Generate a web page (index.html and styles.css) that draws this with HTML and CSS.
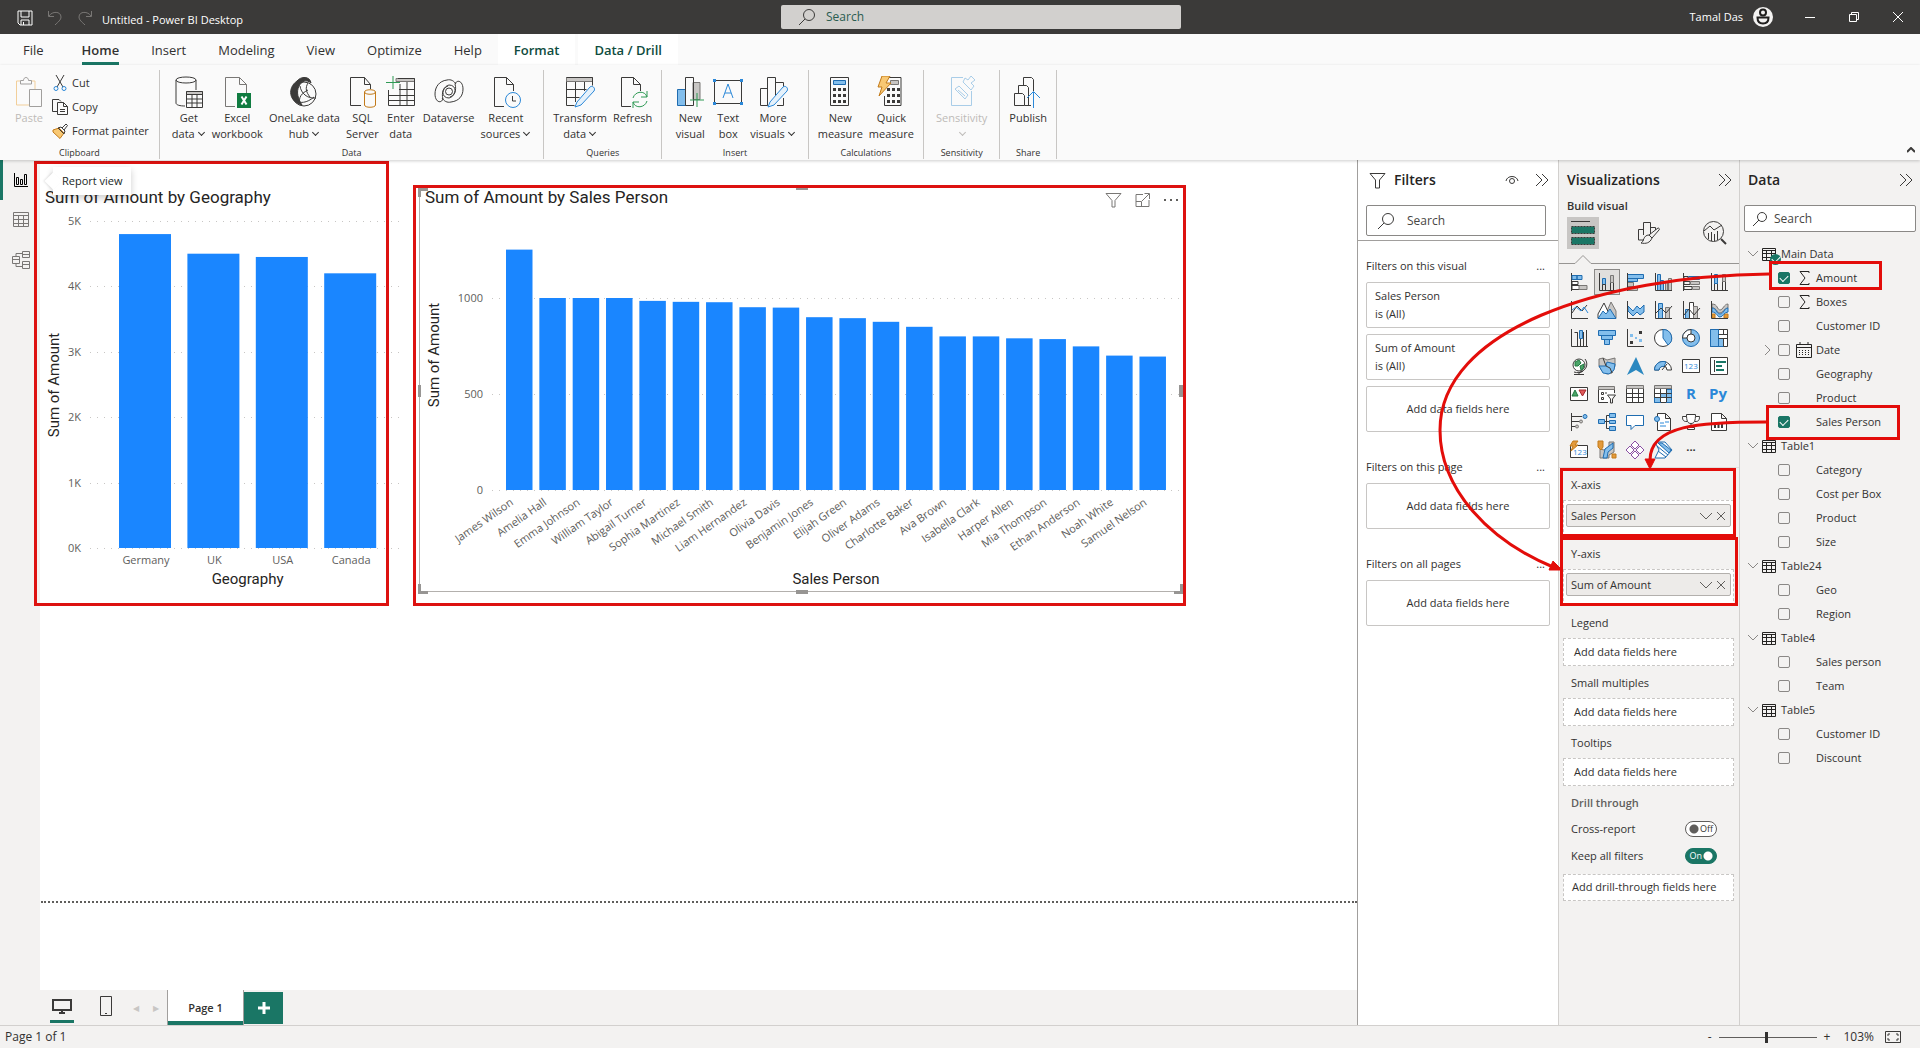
FILE: index.html
```html
<!DOCTYPE html>
<html lang="en">
  <head>
    <meta charset="UTF-8">
    <meta name="viewport" content="width=device-width, initial-scale=1.0">
    <title>Untitled - Power BI Desktop</title>
    <link rel="stylesheet" href="styles.css">
  </head>
  <body>
    <header class="titlebar">
      <div class="titlebar-left">
        <button class="plain" aria-label="Save"><svg width="16" height="16"><path d="M1 1h14v14H3l-2-2zM4 1v6h8V1M4 15v-5h8v5M6.5 12v3"/></svg></button>
        <button class="plain dim" aria-label="Undo"><svg width="16" height="16"><path d="M1.5 1v5.5H7M2 6C5 1 14 1 14 7c0 3-3 5-6 8"/></svg></button>
        <button class="plain dim" aria-label="Redo"><svg width="16" height="16"><path d="M14.5 1v5.5H9M14 6C11 1 2 1 2 7c0 3 3 5 6 8"/></svg></button>
        <span>Untitled - Power BI Desktop</span>
      </div>
      <label class="search title-search">
        <svg width="18" height="18"><circle cx="11" cy="7" r="5.5"/><path d="M7 11l-6 6"/></svg>
        <input type="text" placeholder="Search" aria-label="Search">
      </label>
      <div class="titlebar-right">
        <span>Tamal Das</span>
        <svg class="avatar" width="20" height="20"><circle class="face" cx="10" cy="10" r="10"/><circle cx="10" cy="5.5" r="3"/><path d="M4.5 10.5h11c0 4-2 6-5.5 6s-5.5-2-5.5-6z"/></svg>
        <button class="plain" aria-label="Minimize"><svg width="10" height="10"><path d="M0 5.5h10"/></svg></button>
        <button class="plain" aria-label="Restore"><svg width="10" height="10"><path d="M.5 2.5h7v7h-7zM2.5 2.5v-2h7v7h-2"/></svg></button>
        <button class="plain" aria-label="Close"><svg width="10" height="10"><path d="M0 0l10 10M10 0L0 10"/></svg></button>
      </div>
    </header>

    <nav class="tabs">
      <button>File</button>
      <button class="active">Home</button>
      <button>Insert</button>
      <button>Modeling</button>
      <button>View</button>
      <button>Optimize</button>
      <button>Help</button>
      <button class="context">Format</button>
      <button class="context">Data / Drill</button>
    </nav>

    <section class="ribbon">
      <div class="group clipboard">
        <div class="tools">
          <button class="tool disabled" disabled>
            <svg width="30" height="32"><path class="or" d="M6 5H2.5v24H15M17 5h4v8"/><path d="M6.5 8V4.5h3c0-4 5-4 5 0h3V8z"/><path d="M15.5 13.5h12v17h-12z"/></svg>
            <span>Paste</span>
          </button>
          <div class="small-tools">
            <button><svg width="16" height="16"><path d="M4 0l7 12M12 0L5 12"/><circle class="bl" cx="4" cy="13.5" r="2"/><circle class="bl" cx="12" cy="13.5" r="2"/></svg>Cut</button>
            <button><svg width="16" height="16"><path d="M5 12.5H.5v-12H7l2 2M5.5 3.5h6l4 4v8h-10zM11.5 3.5v4h4M8 10.5h5M8 12.5h5"/></svg>Copy</button>
            <button><svg width="16" height="16"><path class="of" d="M1 7l6-2 5 5-4 5.5L1 9z"/><path d="M6 5l6 6 1-3-4-4zM10 5l4-4 1.5 1.5L12 7"/></svg>Format painter</button>
          </div>
        </div>
        <h2>Clipboard</h2>
      </div>

      <div class="group wide">
        <div class="tools">
          <button class="tool">
            <svg width="30" height="32"><path d="M22 14V4c0-4-20-4-20 0v23c0 2 4 3 9 3M2 4c0 4 20 4 20 0"/><path class="gf" d="M12.5 15.5h16v3h-16z"/><path d="M12.5 15.5h16v16h-16zM12.5 18.5h16M12.5 23h16M12.5 27h16M18 18.5v13M23 18.5v13"/></svg>
            <span>Get<br>data<i class="chev"></i></span>
          </button>
          <button class="tool">
            <svg width="30" height="32"><path class="soft" d="M13 30.5H3.5v-29h14l7 7V17M17.5 1.5v7h7"/><path class="xl" d="M15 17h14v15H15z"/><path class="xx" d="M19.5 20.5l5 8M24.5 20.5l-5 8"/></svg>
            <span>Excel<br>workbook</span>
          </button>
          <button class="tool">
            <svg width="30" height="32"><circle cx="15" cy="18" r="12"/><path class="kf" d="M8 5c4-5 13-5 14 2-5-4-9-2-12 3-3 6-1 13 3 19C0 26-2 12 8 5z"/><path d="M11 10c1 7 7 13 16 12M19 7c-3 5-2 9 2 14M11 28c-2-7 2-11 8-14M5 24c6 4 13 3 20-3"/></svg>
            <span>OneLake data<br>hub<i class="chev"></i></span>
          </button>
          <button class="tool">
            <svg width="30" height="32"><path d="M14 29.5H3.5v-28h14l6 7V13M17.5 1.5v7h6"/><path class="brn" d="M17.5 16v13c0 3 11 3 11 0V16c0-3-11-3-11 0c0 3 11 3 11 0"/></svg>
            <span>SQL<br>Server</span>
          </button>
          <button class="tool">
            <svg width="30" height="32"><path class="gf" d="M10 2.5h18.5v3H10z"/><path d="M12 2.5h16.5v27h-26V14M2.5 19.5h26M2.5 24.5h26M13 13.5h15.5M14 8v21M21 6v23"/><path class="gr" d="M7 0v13M0 6.5h14"/></svg>
            <span>Enter<br>data</span>
          </button>
          <button class="tool">
            <svg width="30" height="32"><path d="M17 26c8-1 12-6 12-13 0-8-6-10-8-5 2 6-1 13-6 14-8 0-8-10-1-12M13 4C5 5 1 11 1 18c0 8 6 10 8 5-2-6 1-13 6-14 8 0 8 10 1 12"/><circle cx="15" cy="15.5" r="3.5"/><path d="M13 4c4-1 7 1 9 4M17 26c-4 1-7-1-9-4"/></svg>
            <span>Dataverse</span>
          </button>
          <button class="tool">
            <svg width="30" height="32"><path d="M13 30.5H3.5v-29h12l7 7V15M15.5 1.5v7h7"/><circle class="bl" cx="22" cy="24" r="7.5"/><path d="M21.5 20v5H25"/></svg>
            <span>Recent<br>sources<i class="chev"></i></span>
          </button>
        </div>
        <h2>Data</h2>
      </div>

      <div class="group">
        <div class="tools">
          <button class="tool">
            <svg width="30" height="32"><path class="gf" d="M1.5 1.5h26v4h-26z"/><path d="M1.5 5.5v24h8M1.5 1.5h26v8M1.5 13.5h20M1.5 21.5h13M10.5 6v20M19.5 6v9"/><path class="pen" d="M12 26L25 11c2-2 6 1 4 4L16 29l-6 2z"/></svg>
            <span>Transform<br>data<i class="chev"></i></span>
          </button>
          <button class="tool">
            <svg width="30" height="32"><path d="M13 30.5H3.5v-29h12l7 7V15M15.5 1.5v7h7"/><path class="gr" d="M15 22c2-7 12-8 14-1M29 15v6h-6M29 25c-2 7-12 8-14 1M15 32v-6h6"/></svg>
            <span>Refresh</span>
          </button>
        </div>
        <h2>Queries</h2>
      </div>

      <div class="group wide">
        <div class="tools">
          <button class="tool">
            <svg width="30" height="32"><path class="bf" d="M2.5 13.5h8v16h-8z"/><path class="gf" d="M18 6.5h7v17h-7z"/><path d="M10.5 1.5h8v28h-8z"/><path class="gr" d="M22 17v14M15 24h14"/></svg>
            <span>New<br>visual</span>
          </button>
          <button class="tool">
            <svg width="30" height="32"><path d="M1.5 4.5h27v23h-27z"/><path class="bk" d="M0 3h3v3H0zM27 3h3v3h-3zM0 26h3v3H0zM27 26h3v3h-3z"/><path class="bl" d="M10 22l5-14 5 14M12 17h6"/></svg>
            <span>Text<br>box</span>
          </button>
          <button class="tool">
            <svg width="30" height="32"><path d="M9.5 29.5h-7v-17h7zM9.5 12V1.5h8V20M17.5 6.5h8v5M9.5 29.5V12M25.5 22v7.5H19"/><path class="pen" d="M12 26L25 11c2-2 6 1 4 4L16 29l-6 2z"/></svg>
            <span>More<br>visuals<i class="chev"></i></span>
          </button>
        </div>
        <h2>Insert</h2>
      </div>

      <div class="group">
        <div class="tools">
          <button class="tool">
            <svg width="30" height="32"><path d="M5.5 1.5h18v28h-18z"/><path class="bf" d="M8.5 4.5h12v4h-12z"/><path class="dots" d="M8 13.5h13M8 19.5h13M8 25.5h13"/></svg>
            <span>New<br>measure</span>
          </button>
          <button class="tool">
            <svg width="30" height="32"><path d="M11 1.5h14v28H8.5V20"/><path class="gf" d="M14.5 4.5h8v4h-8z"/><path class="dots" d="M11 13.5h13M11 19.5h13M11 25.5h13"/><path class="of" d="M6 0h8l-4 7h5L3 20l3-9H2z"/></svg>
            <span>Quick<br>measure</span>
          </button>
        </div>
        <h2>Calculations</h2>
      </div>

      <div class="group wide">
        <div class="tools">
          <button class="tool disabled blue" disabled>
            <svg width="30" height="32"><path d="M16 1.5H4.5v28h20V15"/><path d="M8 13l4-3 9 9-3 4zM11 14l7 6M16 6l8 8 3-4-3-3 4-3-4-4-3 4-3-2z"/></svg>
            <span>Sensitivity<br><i class="chev"></i></span>
          </button>
        </div>
        <h2>Sensitivity</h2>
      </div>

      <div class="group">
        <div class="tools">
          <button class="tool">
            <svg width="30" height="32"><path d="M10.5 9V1.5h8l2 2V15M5.5 17V9.5h8l2 2V18M1.5 17.5h8l2 2v10h-10zM11.5 29.5H18M15.5 18v11"/><path class="bl" d="M20.5 32V16M14 22l6.5-6.5L27 22"/></svg>
            <span>Publish</span>
          </button>
        </div>
        <h2>Share</h2>
      </div>
      <button class="plain collapse" aria-label="Collapse ribbon"><svg width="8" height="6"><path d="M0 5l4-4 4 4"/></svg></button>
    </section>

    <main class="workspace">
      <aside class="rail">
        <button class="current" aria-label="Report view"><svg width="16" height="16"><path d="M1.5 1v13.5H15M3.5 5.5h2v7h-2zM7.5 7.5h2v5h-2zM11.5 2.5h2v10h-2z"/></svg></button>
        <button aria-label="Table view"><svg width="18" height="16"><path d="M1.5.5h15v14h-15zM1.5 3.5h15M1.5 7.5h15M1.5 11.5h15M6.5 3.5v11M11.5 3.5v11"/></svg></button>
        <button aria-label="Model view"><svg width="18" height="18"><path d="M10.5.5h7v6h-7zM10.5 3.5h7M10.5 10.5h7v7h-7zM10.5 13.5h7M.5 5.5h7v7h-7zM.5 8.5h7M4 5V2.5h6.5M4 12.5v3h6.5"/></svg></button>
      </aside>

      <section class="report">
        <div class="canvas">
          <div class="page-edge"></div>
          <figure class="visual geography">
            <figcaption>Sum of Amount by Geography</figcaption>
            <svg id="geographyChart" width="364" height="390"></svg>
          </figure>
          <figure class="visual sales">
            <figcaption>Sum of Amount by Sales Person</figcaption>
            <svg id="salesChart" width="764" height="380"></svg>
            <svg class="visual-tools" width="74" height="16">
              <path d="M1 1.5h15l-6 7V15H7V8.5z"/>
              <path d="M38 2.5h-7v12h13V8M31 9.5h5.5v5M37 9l7-7M39.5 1.5h5V7"/>
              <path class="more" d="M59 7h2v2h-2zM65 7h2v2h-2zM71 7h2v2h-2z"/>
            </svg>
            <svg class="handles" width="765" height="408"><path d="M0 2h10v3H3v6H0zM0 408v-10h3v7h7v3zM0 199h3v12H0zM378 2h12v2h-12zM378 404h12v4h-12zM765 408h-9v-3h6v-7h3zM761 199h4v12h-4z"/></svg>
          </figure>
          <div class="callout callout-geography"></div>
          <div class="callout callout-sales"></div>
          <div class="tip" role="tooltip">Report view</div>
        </div>

        <footer class="pages">
          <button class="device on" aria-label="Desktop layout"><svg width="20" height="16"><path d="M1 2h18v10H1zM10 12v3M7 15h6"/></svg></button>
          <button class="device phone" aria-label="Mobile layout"><svg width="14" height="21"><path d="M1.5.5h11v19h-11zM6 17.5h2"/></svg></button>
          <button class="step" aria-label="Previous page">◀</button>
          <button class="step" aria-label="Next page">▶</button>
          <button class="page-tab">Page 1</button>
          <button class="add-page" aria-label="New page"><svg width="12" height="12"><path d="M6 0v12M0 6h12"/></svg></button>
        </footer>
      </section>

      <aside class="pane filters">
        <div class="pane-head">
          <svg class="funnel" width="17" height="17"><path d="M1 1.5h15L10.5 8v8h-4V8z"/></svg>
          <h3>Filters</h3>
          <svg class="eye" width="14" height="10"><path d="M1 6c1-6 11-6 12 0"/><circle cx="7" cy="6" r="2.5"/></svg>
          <button class="plain fold" aria-label="Collapse"><svg width="14" height="14"><path d="M1 1l6 6-6 6M7 1l6 6-6 6"/></svg></button>
        </div>
        <div class="filter-search">
          <label class="search">
            <svg width="18" height="18"><circle cx="11" cy="7" r="5.5"/><path d="M7 11l-6 6"/></svg>
            <input type="text" placeholder="Search" aria-label="Search filters">
          </label>
        </div>
        <div class="filter-group">
          <h4>Filters on this visual <span>...</span></h4>
          <div class="card">Sales Person<br>is (All)</div>
          <div class="card">Sum of Amount<br>is (All)</div>
          <div class="card empty">Add data fields here</div>
        </div>
        <div class="filter-group">
          <h4>Filters on this page <span>...</span></h4>
          <div class="card empty">Add data fields here</div>
        </div>
        <div class="filter-group">
          <h4>Filters on all pages <span>...</span></h4>
          <div class="card empty">Add data fields here</div>
        </div>
      </aside>

      <aside class="pane build">
        <div class="pane-head">
          <h3>Visualizations</h3>
          <button class="plain fold" aria-label="Collapse"><svg width="14" height="14"><path d="M1 1l6 6-6 6M7 1l6 6-6 6"/></svg></button>
        </div>
        <h4>Build visual</h4>
        <div class="modes">
          <button class="on" aria-label="Build visual"><svg width="26" height="26"><path d="M1 1.5h19"/><path class="stitch" d="M1.5 6.5h23v7h-23zM1.5 17.5h23v7h-23z"/></svg></button>
          <button aria-label="Format visual"><svg width="26" height="26"><path d="M8 20H2.5V9.5H7M7.5 15V2.5h7V14M14.5 7.5h5V10"/><path d="M13 15l9-7c1 0 2 1 1 2l-7 8zM13 15l3 3c-2 5-6 6-11 5 3-1 2-8 8-8z"/></svg></button>
          <button aria-label="Analytics"><svg width="26" height="26"><circle cx="11.5" cy="11.5" r="10"/><path d="M2 11l6-5 4 4 8-5M6.5 13v6M9.5 12v9M12.5 14v7M15.5 11v9"/><path class="thick" d="M19 19l5 5"/></svg></button>
        </div>
        <svg class="notch" width="180" height="10"><path d="M0 9.5h16l8-8 8 8h148"/></svg>
        <div class="gallery">
          <svg><path d="M1.5 0v18"/><path class="b" d="M2 2.5h5v4H2zM7 2.5h5v4H7z"/><path class="w" d="M2 8.5h6v3H2zM2 12.5h9v4H2z"/><path class="g" d="M9 12.5h8v4H9z"/></svg>
          <svg class="picked"><path d="M1.5 0v17.5H18"/><path class="b" d="M4.5 5.5h3v6h-3z"/><path d="M4.5 11.5h3v6h-3zM12.5 9.5h3v8h-3z"/><path class="g" d="M12.5 2.5h3v7h-3z"/></svg>
          <svg><path class="b" d="M1.5 1.5h16v4h-16zM1.5 5.5h10v3h-10z"/><path class="g" d="M1.5 9.5h6v4h-6zM1.5 14.5h10v3h-10z"/><path d="M1.5 0v18"/></svg>
          <svg><path class="b" d="M3.5 1.5h3v16h-3zM6.5 7.5h3v10h-3z"/><path class="g" d="M11.5 9.5h2v8h-2zM14.5 5.5h3v12h-3z"/><path d="M1.5 0v17.5H18"/></svg>
          <svg><path d="M1.5 0v18M2 3.5h4v3H2zM2 8.5h6v3H2zM2 13.5h8v3H2z"/><path class="b" d="M6.5 3.5h11v3h-11z"/><path class="g" d="M8.5 8.5h9v3h-9zM10.5 13.5h7v3h-7z"/></svg>
          <svg><path d="M1.5 0v17.5H18M4.5 10.5h3v7h-3zM12.5 8.5h3v9h-3z"/><path class="b" d="M4.5 1.5h3v9h-3z"/><path class="g" d="M12.5 1.5h3v7h-3z"/></svg>

          <svg><path d="M1.5 0v17.5H18M2 12l5-7 5 5 5-6"/><path class="bs" d="M2 9l4-3 5 4 3-4 4 6"/></svg>
          <svg><path class="g" d="M6 17L13 1l5 9v7z"/><path class="w" d="M0 13L6 2l7 15H0z"/><path class="b" d="M0 17.5L5 10l3 3 4-5 6 9.5z"/></svg>
          <svg><path class="b" d="M2 5l5 5 4-5 3 3 4-4v7l-4 3-3-3-4 4-5-5z"/><path d="M1.5 0v17.5H18"/></svg>
          <svg><path class="b" d="M4.5 2.5h4v15h-4z"/><path class="g" d="M11.5 6.5h4v11h-4z"/><path d="M1.5 0v17.5H18M2 12l5-5 5 5 6-7"/></svg>
          <svg><path class="b" d="M3.5 8.5h4v9h-4z"/><path class="w" d="M7.5 1.5h4v16h-4z"/><path class="g" d="M11.5 5.5h4v12h-4z"/><path d="M1.5 0v17.5H18M2 14l5-6 5 6 6-7"/></svg>
          <svg><path class="g" d="M2 3c6 0 5 6 8 6s4-6 8-6v4c-4 0-5 5-8 5s-3-5-8-5z"/><path class="o" d="M2 13h3v4H2zM14 13h4v4h-4z"/><path class="b" d="M2 7c5 0 4 6 8 6s4-6 8-6v4c-4 0-5 5-8 5s-3-5-8-5z"/><path d="M1.5 0v17.5H18"/></svg>

          <svg><path d="M1.5 0v17.5H18M4.5 3.5h3v14M7.5 3.5v14M10.5 10v7M13.5 3v14.5M16.5 1v16.5"/><path class="b" d="M9.5 1.5h3v8h-3z"/></svg>
          <svg><path class="b" d="M.5 1.5h17v5H.5zM3.5 6.5h11v4h-11zM6.5 10.5h5v5h-5z"/></svg>
          <svg><path d="M1.5 0v17.5H18"/><path class="kf" d="M13 2h3v3h-3zM4 12h3v3H4z"/><path class="bk" d="M4 5h3v3H4zM9 8h2v2H9zM13 10h3v3h-3z"/></svg>
          <svg><circle class="w" cx="9" cy="9" r="8.5"/><path class="b" d="M9 .5a8.5 8.5 0 0 1 5 15.5L9 9z"/></svg>
          <svg><circle class="b" cx="9" cy="9" r="8.5"/><path class="w" d="M.5 9A8.5 8.5 0 0 1 9 .5V5a4 4 0 0 0-4 4z"/><circle class="w" cx="9" cy="9" r="4"/></svg>
          <svg><path class="w" d="M.5.5h17v17H.5z"/><path class="b" d="M.5.5h8v17h-8zM8.5 9.5h5v8h-5z"/><path d="M8.5 5.5h9M8.5 9.5h9M13.5.5v5M13.5 9.5v8"/></svg>

          <svg><circle class="w" cx="9" cy="8" r="6"/><path class="grn" d="M5 5l4-2 2 3-3 3-3 0zM10 9l4-2-1 5-2 1z"/><path d="M15 2c4 5 1 12-5 13M4 15c3 1 7 1 9-1M9 15v2M4 17.5h10"/></svg>
          <svg><path class="g" d="M1 2l4-1 4 2 8-2v8l-3 7-5 1-5-3-3-5z"/><path class="b" d="M1 9l7 0 1-4 8 2-1 6-5 4-6-1z"/><path d="M5 1l3 8 4 2 2 5"/></svg>
          <svg><path class="nav" d="M10 0L1 18l9-5 8 5z"/></svg>
          <svg><path class="w" d="M.5 13a8.5 8.5 0 0 1 17 0H13a4 4 0 0 0-8 0z"/><path class="b" d="M.5 13A8.5 8.5 0 0 1 12 5l-2 4.5A4 4 0 0 0 5 13z"/><path d="M8 13l5-6"/></svg>
          <svg><path class="w" d="M.5 2.5h17v13H.5z"/><text x="2" y="12">123</text></svg>
          <svg><path class="w" d="M.5.5h17v17H.5z"/><path d="M4.5 3v12"/><path class="teal" d="M6 5h10M6 9h6M6 13h8"/></svg>

          <svg><path class="w" d="M.5 2.5h17v13H.5z"/><path class="grn" d="M2 11l3-6 3 6z"/><path class="red" d="M9 5h7l-3.5 6z"/></svg>
          <svg><path class="w" d="M10 17.5H.5V2.5h16V8"/><path class="g" d="M.5 1.5h16v3H.5z"/><path d="M3.5 7.5h2v2h-2zM3.5 12.5h2v2h-2zM7 8h2M9.5 10h8l-3 4v4h-2v-4z"/></svg>
          <svg><path class="w" d="M.5 1.5h17v16H.5z"/><path class="g" d="M.5.5h17v3H.5z"/><path d="M.5 8.5h17M.5 12.5h17M6.5 4v13M12.5 4v13"/></svg>
          <svg><path class="w" d="M.5 1.5h17v16H.5z"/><path class="b" d="M6.5 8.5h6v4h-6zM12.5 4.5h5v13h-5zM.5 12.5h6v5h-6z"/><path class="g" d="M.5.5h17v3H.5z"/><path d="M.5 8.5h17M.5 12.5h17M6.5 4v13M12.5 4v13"/></svg>
          <svg><text class="big" x="4" y="14">R</text></svg>
          <svg><text class="big" x="-1" y="14">Py</text></svg>

          <svg><path d="M1.5 0v18M2 3.5h10M2 8.5h8M2 13.5h4"/><circle class="b" cx="15" cy="3.5" r="2"/><circle class="g" cx="11" cy="8.5" r="1.5"/><circle class="g" cx="7" cy="13.5" r="1.5"/></svg>
          <svg><path d="M6 8.5h5M8.5 2.5v13M8.5 2.5H11M8.5 15.5H11"/><path class="b" d="M.5 6.5h6v4h-6zM11.5.5h6v4h-6zM11.5 7.5h6v3h-6zM11.5 13.5h6v4h-6z"/></svg>
          <svg><path class="wb" d="M.5 2.5h17v10H9l-4 4v-4H.5z"/></svg>
          <svg><path class="w" d="M3.5.5h8l5 5v12h-13zM11.5.5v5h5"/><circle class="b" cx="3" cy="6" r="2.5"/><path class="bs" d="M6 10h4M11 9h4M6 13h6"/></svg>
          <svg><path class="w" d="M4.5 1.5h9c0 6-1 9-4.5 9s-4.5-3-4.5-9zM4.5 3.5h-4c0 4 1 5 4.5 5M13.5 3.5h4c0 4-1 5-4.5 5M9 11v3M5.5 16.5h7v-2h-7z"/></svg>
          <svg><path class="w" d="M1.5.5h10l5 5v12h-15zM11.5.5v5h5"/><path class="thick" d="M5 15v-3M8.5 15V9M12 15v-5"/></svg>

          <svg><path class="w" d="M.5 4.5h17v12H.5z"/><text x="3" y="14">123</text><path class="o" d="M3 0h5L5 4h3L1 10l2-5H0z"/></svg>
          <svg><path class="g" d="M2 8v9h9v-3l5-3V1h-5v5l-5 3z"/><path class="b" d="M7 8l8-6v5l-5 4-1 6H5z"/><path class="o" d="M0 0h5v6l-2 3-3-3zM14 13h4v4h-4z"/></svg>
          <svg class="violet"><path d="M9 0l4 4-4 4-4-4zM4 5l4 4-4 4-4-4zM14 5l4 4-4 4-4-4zM9 10l4 4-4 4-4-4z"/></svg>
          <svg><path class="wb" d="M1 1h10l7 8-7 8H1l4-8z"/><path class="wb" d="M5 3l11 8M3 5l11 9M4 10l8 6"/><path class="b" d="M4 2h4l9 7-2 3z"/></svg>
          <span class="more">···</span>
        </div>

        <div class="wells">
          <h5>X-axis</h5>
          <div class="well"><div class="pill">Sales Person<svg width="28" height="10"><path d="M1 2l6 6 6-6M18 1l8 8M26 1l-8 8"/></svg></div></div>
          <h5>Y-axis</h5>
          <div class="well"><div class="pill">Sum of Amount<svg width="28" height="10"><path d="M1 2l6 6 6-6M18 1l8 8M26 1l-8 8"/></svg></div></div>
          <h5>Legend</h5>
          <div class="well blank">Add data fields here</div>
          <h5>Small multiples</h5>
          <div class="well blank">Add data fields here</div>
          <h5>Tooltips</h5>
          <div class="well blank">Add data fields here</div>
          <h5 class="strong">Drill through</h5>
          <label class="switch">Cross-report <input type="checkbox" role="switch"><span>Off</span></label>
          <label class="switch">Keep all filters <input type="checkbox" role="switch" checked><span>On</span></label>
          <div class="well blank drill">Add drill-through fields here</div>
        </div>
      </aside>

      <aside class="pane data">
        <div class="pane-head">
          <h3>Data</h3>
          <button class="plain fold" aria-label="Collapse"><svg width="14" height="14"><path d="M1 1l6 6-6 6M7 1l6 6-6 6"/></svg></button>
        </div>
        <label class="search">
          <svg width="16" height="16"><circle cx="10" cy="6" r="4.5"/><path d="M7 9l-6 6"/></svg>
          <input type="text" placeholder="Search" aria-label="Search fields">
        </label>
        <ul class="fields" id="fields"></ul>
      </aside>

      <!-- red markup linking the ticked fields to the axis wells -->
      <svg class="markup" width="500" height="480">
        <rect x="350.5" y="102.5" width="110" height="26"/>
        <rect x="347.5" y="246.5" width="131" height="32"/>
        <rect x="141.5" y="309.5" width="173" height="66"/>
        <rect x="141.5" y="378.5" width="175" height="66"/>
        <path d="M349 114C180 116 20 170 20 270c0 60 50 111 113 137"/>
        <path d="M346 262c-66 0-116 3-116 38"/>
        <path class="tipfill" d="M142 410l-13 0 4-9zM230 309l-5-10h10z"/>
      </svg>
    </main>

    <footer class="status">
      <span>Page 1 of 1</span>
      <div class="zoom">
        <button class="plain" aria-label="Zoom out">-</button>
        <input type="range" min="0" max="100" value="49" aria-label="Zoom">
        <button class="plain" aria-label="Zoom in">+</button>
        <span>103%</span>
        <svg width="16" height="12"><path d="M.5.5h15v11H.5zM3 5V3h2M11 3h2v2M13 7v2h-2M5 9H3V7"/></svg>
      </div>
    </footer>

    <script>
      const NS = 'http://www.w3.org/2000/svg';

      function add(parent, tag, attrs, text) {
        const el = document.createElementNS(NS, tag);
        for (const key in attrs) el.setAttribute(key, attrs[key]);
        if (text) el.textContent = text;
        parent.appendChild(el);
      }

      function drawColumns(id, c) {
        const svg = document.getElementById(id);
        c.ticks.forEach(([value, label]) => {
          const y = Math.round(c.base - value * c.scale);
          add(svg, 'line', { class: 'grid', x1: c.left, x2: c.right, y1: y + 0.5, y2: y + 0.5 });
          add(svg, 'text', { class: 'tick', x: c.left - 9, y: y + 4, 'text-anchor': 'end' }, label);
        });
        c.rows.forEach(([name, value], i) => {
          const x = c.first + i * c.pitch;
          const h = value * c.scale;
          add(svg, 'rect', { class: 'bar', x: x, y: c.base - h, width: c.width, height: h });
          if (c.slant) {
            const tx = x + 8, ty = c.base + 14;
            add(svg, 'text', { class: 'tick', x: tx, y: ty, 'text-anchor': 'end', transform: `rotate(-35 ${tx} ${ty})` }, name);
          } else {
            add(svg, 'text', { class: 'tick', x: x + c.width / 2 + 1, y: c.base + 16, 'text-anchor': 'middle' }, name);
          }
        });
        const mid = c.first + ((c.rows.length - 1) * c.pitch + c.width) / 2;
        add(svg, 'text', { class: 'axis', x: mid, y: 375, 'text-anchor': 'middle' }, c.xTitle);
        add(svg, 'text', { class: 'axis', x: c.titleX, y: c.titleY, 'text-anchor': 'middle', transform: `rotate(-90 ${c.titleX} ${c.titleY})` }, 'Sum of Amount');
      }

      drawColumns('geographyChart', {
        left: 50, right: 362, base: 339, scale: 0.0654, first: 79, pitch: 68.4, width: 52,
        titleX: 19, titleY: 176, xTitle: 'Geography',
        ticks: [[5000, '5K'], [4000, '4K'], [3000, '3K'], [2000, '2K'], [1000, '1K'], [0, '0K']],
        rows: [['Germany', 4800], ['UK', 4500], ['USA', 4450], ['Canada', 4200]]
      });

      drawColumns('salesChart', {
        left: 72, right: 762, base: 281, scale: 0.192, first: 86, pitch: 33.34, width: 26.5, slant: true,
        titleX: 19, titleY: 146, xTitle: 'Sales Person',
        ticks: [[1000, '1000'], [500, '500'], [0, '0']],
        rows: [
          ['James Wilson', 1252], ['Amelia Hall', 1000], ['Emma Johnson', 1000], ['William Taylor', 1000],
          ['Abigail Turner', 985], ['Sophia Martinez', 980], ['Michael Smith', 978], ['Liam Hernandez', 952],
          ['Olivia Davis', 950], ['Benjamin Jones', 900], ['Elijah Green', 895], ['Oliver Adams', 876],
          ['Charlotte Baker', 850], ['Ava Brown', 800], ['Isabella Clark', 800], ['Harper Allen', 790],
          ['Mia Thompson', 786], ['Ethan Anderson', 748], ['Noah White', 700], ['Samuel Nelson', 695]
        ]
      });

      // * ticked, + numeric, @ date
      const tables = {
        'Main Data': ['*+Amount', '+Boxes', 'Customer ID', '@Date', 'Geography', 'Product', '*Sales Person'],
        'Table1': ['Category', 'Cost per Box', 'Product', 'Size'],
        'Table24': ['Geo', 'Region'],
        'Table4': ['Sales person', 'Team'],
        'Table5': ['Customer ID', 'Discount']
      };
      const down = '<svg width="12" height="8"><path d="M1 1l5 5 5-5"/></svg>';
      const grid = '<svg class="dark" width="14" height="13"><path d="M.5.5h13v12H.5zM.5 2.5h13M.5 5.5h13M.5 9.5h13M4.5 2v10M9.5 2v10"/></svg>';
      const sigma = '<svg class="dark" width="16" height="16"><path d="M13 3V1.5H4l5 6.5-5 6.5h9V13"/></svg>';
      const calendar = '<svg class="dark" width="16" height="16"><path d="M.5 2.5h15v13H.5zM.5 5.5h15M4 0v3M12 0v3"/><path stroke-dasharray="1 2" d="M3 8.5h11M3 10.5h11M3 12.5h11"/></svg>';
      const right = '<svg width="8" height="12"><path d="M1 1l5 5-5 5"/></svg>';

      let html = '';
      for (const name in tables) {
        const badge = name === 'Main Data' ? '<span class="badge"></span>' : '';
        html += `<li class="table-row">${down}<span class="table-icon">${grid}${badge}</span>${name}</li>`;
        tables[name].forEach(field => {
          const label = field.replace(/[*+@]/g, '');
          const icon = field.includes('+') ? sigma : field.includes('@') ? calendar : '';
          html += `<li><label><span class="expand">${field.includes('@') ? right : ''}</span>` +
            `<input type="checkbox"${field.includes('*') ? ' checked' : ''}>` +
            `<span class="type">${icon}</span>${label}</label></li>`;
        });
      }
      document.getElementById('fields').innerHTML = html;
    </script>
  </body>
</html>
```

FILE: styles.css
```css
* {
    box-sizing: border-box;
}

body {
    margin: 0;
    min-height: 100vh;
    display: flex;
    flex-direction: column;
    font-family: "Open Sans", "Noto Sans", sans-serif;
    font-size: 11px;
    line-height: 16px;
    color: #323130;
    background: #f3f2f1;
}

h2, h3, h4, h5, ul, figure {
    margin: 0;
    padding: 0;
    font-weight: 400;
}

button, input {
    font: inherit;
    color: inherit;
}

button {
    border: 0;
    padding: 0;
    background: none;
}

svg {
    display: block;
    flex: none;
    fill: none;
    stroke: #3b3a39;
}

.plain {
    display: flex;
    align-items: center;
}

/* Title bar */
.titlebar {
    display: grid;
    grid-template-columns: 1fr 400px 739px;
    align-items: center;
    height: 34px;
    background: #3b3a39;
    color: #fff;
}

.titlebar svg {
    stroke: #fff;
}

.titlebar .dim svg {
    stroke: #797775;
}

.titlebar-left {
    display: flex;
    align-items: center;
    gap: 14px;
    padding: 2px 0 0 17px;
}

.titlebar-left span {
    padding-top: 4px;
    margin-left: -5px;
}

.titlebar-right {
    display: flex;
    align-items: center;
    justify-content: flex-end;
    gap: 34px;
    padding-right: 17px;
}

.titlebar-right span {
    margin-right: -24px;
}

.titlebar .avatar {
    margin-right: -2px;
    stroke: #201f1e;
    stroke-width: 2;
}

.avatar .face {
    fill: #f3f2f1;
    stroke: none;
}

.search {
    display: flex;
    align-items: center;
    border: 1px solid #8a8886;
    border-radius: 2px;
    background: #fff;
}

.search input {
    width: 100%;
    min-width: 0;
    border: 0;
    padding: 0;
    outline: none;
    background: none;
    font-size: 12px;
}

.search input::placeholder {
    color: #484644;
    opacity: 1;
}

.title-search {
    height: 24px;
    gap: 10px;
    padding-left: 17px;
    border: 0;
    background: #d2d0ce;
}

.titlebar .title-search svg {
    stroke: #3b3a39;
}

.title-search input::placeholder {
    color: #2b5c50;
}

/* Ribbon */
.tabs {
    display: flex;
    height: 31px;
    padding-left: 7px;
    background: #fafafa;
    font-size: 13px;
}

.tabs button {
    padding: 0 16px;
}

.tabs button:first-child {
    margin-right: 6px;
}

.tabs .active {
    font-weight: 600;
    background: linear-gradient(#1a7665, #1a7665) center bottom / calc(100% - 32px) 3px no-repeat;
}

.tabs .context {
    margin-right: 3px;
    color: #0f4c40;
    font-weight: 600;
    background: #fff;
}

.ribbon {
    display: flex;
    height: 95px;
    padding-top: 5px;
    background: #fafafa;
    box-shadow: 0 1px 3px rgba(0, 0, 0, 0.2);
    z-index: 1;
}

.group {
    display: flex;
    flex-direction: column;
    justify-content: space-between;
    height: 89px;
    padding: 6px 6px 0;
    border-right: 1px solid #c8c6c4;
}

.group.clipboard {
    padding: 6px 10px 0 10px;
}

.group.wide {
    padding: 6px 9px 0;
}

.group h2 {
    font-size: 9px;
    line-height: 12px;
    text-align: center;
}

.tools {
    display: flex;
    justify-content: center;
}

.tool {
    display: flex;
    flex-direction: column;
    align-items: center;
    gap: 2px;
    min-width: 38px;
    padding: 0 3px;
    white-space: nowrap;
}

.disabled {
    color: #bebbb8;
}

.disabled svg {
    stroke: #a19f9d;
}

.disabled.blue svg {
    stroke: #a9cde8;
}

.chev {
    display: inline-block;
    width: 5px;
    height: 5px;
    margin: 0 2px 3px 4px;
    border: solid currentColor;
    border-width: 0 1px 1px 0;
    transform: rotate(45deg);
}

.small-tools {
    display: flex;
    flex-direction: column;
    margin: -5px 0 0 4px;
}

.small-tools button {
    display: flex;
    align-items: center;
    gap: 4px;
    height: 24px;
}

.ribbon svg .or { stroke: #f2cf9a; }
.ribbon svg .bl { stroke: #2b88d8; }
.ribbon svg .brn { stroke: #c27a1a; }
.ribbon svg .gr { stroke: #2f9a55; }
.ribbon svg .bf { fill: #83beec; stroke: #1f6cb0; }
.ribbon svg .gf { fill: #c8c6c4; stroke: #797775; }
.ribbon svg .of { fill: #f8c873; stroke: #c27a1a; }
.ribbon svg .kf { fill: #3b3a39; }
.ribbon svg .bk { fill: #2b88d8; stroke: none; }
.ribbon svg .soft { stroke: #797775; }
.ribbon svg .xl { fill: #107c41; stroke: none; }
.ribbon svg .xx { stroke: #fff; stroke-width: 2; }
.ribbon svg .pen { fill: #e5f1fb; stroke: #2b88d8; }
.ribbon svg .dots { stroke-width: 3; stroke-dasharray: 3 2; }

.collapse {
    margin: auto 5px 7px auto;
}

.collapse svg {
    stroke-width: 2;
}

/* Workspace */
.workspace {
    position: relative;
    flex: 1;
    display: flex;
}

.rail {
    width: 40px;
    background: #f3f2f1;
}

.rail button {
    display: flex;
    align-items: center;
    justify-content: center;
    width: 39px;
    height: 40px;
    border-left: 3px solid transparent;
}

.rail .current {
    border-color: #1a7665;
}

.rail svg {
    stroke: #797775;
}

.rail .current svg {
    stroke: #000;
}

.report {
    flex: 1;
    display: flex;
    flex-direction: column;
}

.canvas {
    position: relative;
    flex: 1;
    min-height: 600px;
    background: #fff;
}

.page-edge {
    position: absolute;
    top: 741px;
    left: 1px;
    right: 0;
    border-top: 2px dotted #605e5c;
}

.visual {
    position: absolute;
    top: 25px;
}

.visual figcaption {
    padding-left: 5px;
    font: 17px/24px Roboto, sans-serif;
    color: #252423;
}

.geography {
    left: 0;
}

.sales {
    left: 379px;
    width: 765px;
    height: 407px;
    border: solid #b3b0ad;
    border-width: 0 0 1px 1px;
}

.visual-tools {
    position: absolute;
    top: 7px;
    right: 5px;
    stroke: #797775;
}

.visual-tools .more {
    fill: #605e5c;
    stroke: none;
}

.handles {
    position: absolute;
    top: 1px;
    left: -2px;
}

.handles path {
    fill: #979593;
    stroke: none;
}

.grid {
    stroke: #c8c6c4;
    stroke-dasharray: 1 6;
}

.bar {
    fill: #1a86ff;
    stroke: none;
}

.tick {
    fill: #605e5c;
    stroke: none;
    font-size: 11px;
}

.axis {
    fill: #252423;
    stroke: none;
    font: 15px Roboto, sans-serif;
}

.callout {
    position: absolute;
    border: 3px solid #dd1210;
}

.callout-geography {
    top: 1px;
    left: -6px;
    width: 355px;
    height: 445px;
}

.callout-sales {
    top: 25px;
    left: 373px;
    width: 773px;
    height: 421px;
}

.tip {
    position: absolute;
    top: 7px;
    left: 13px;
    padding: 6px 8px 6px 9px;
    background: #fff;
    color: #201f1e;
    box-shadow: 0 3px 7px rgba(0, 0, 0, 0.2);
}

.tip::before {
    content: "";
    position: absolute;
    top: 8px;
    left: -6px;
    width: 12px;
    height: 12px;
    background: #fff;
    box-shadow: -1px 1px 2px rgba(0, 0, 0, 0.1);
    transform: rotate(45deg);
}

.pages {
    display: flex;
    align-items: center;
    height: 35px;
    padding-left: 10px;
}

.device {
    display: flex;
    align-items: center;
    justify-content: center;
    width: 24px;
    height: 31px;
    margin-right: 20px;
    border-bottom: 3px solid transparent;
}

.device svg {
    stroke-width: 2;
}

.device.phone {
    margin-right: 8px;
}

.phone svg {
    stroke-width: 1;
}

.device.on {
    border-color: #1a7665;
}

.step {
    width: 20px;
    color: #c8c6c4;
    font-size: 8px;
}

.page-tab {
    align-self: stretch;
    width: 77px;
    margin-left: 1px;
    border: solid #a19f9d;
    border-width: 0 1px;
    background: linear-gradient(#1a7665, #1a7665) bottom / 100% 4px no-repeat #fff;
    font-weight: 600;
}

.add-page {
    display: flex;
    align-items: center;
    justify-content: center;
    width: 39px;
    height: 32px;
    background: #1a7665;
}

.add-page svg {
    stroke: #fff;
    stroke-width: 3;
}

/* Side panes */
.pane {
    border-left: 1px solid #d2d0ce;
}

.pane-head {
    display: flex;
    align-items: center;
    height: 40px;
    padding: 0 7px 0 8px;
}

.pane-head h3 {
    flex: 1;
    font-size: 14px;
    font-weight: 600;
    color: #252423;
}

.filters {
    width: 201px;
    border-color: #a19f9d;
    background: #fff;
}

.filters .pane-head {
    gap: 8px;
    padding: 0 9px 0 11px;
}

.eye {
    margin-right: 8px;
}

.filter-search {
    padding: 5px 12px 4px 8px;
    border-bottom: 1px solid #a19f9d;
}

.filter-search .search {
    height: 31px;
    gap: 12px;
    padding-left: 10px;
}

.filter-group {
    padding: 11px 8px 10px;
}

.filter-group h4 {
    display: flex;
    justify-content: space-between;
    padding: 6px 5px 8px 0;
}

.card {
    height: 46px;
    margin-bottom: 6px;
    padding: 4px 8px;
    border: 1px solid #c8c6c4;
    border-radius: 2px;
    line-height: 18px;
}

.card.empty {
    display: flex;
    align-items: center;
    justify-content: center;
    margin: 0;
}

.build {
    width: 181px;
}

.build h4 {
    padding-left: 8px;
    font-weight: 600;
    line-height: 12px;
}

.modes {
    display: flex;
    justify-content: space-between;
    padding: 5px 8px;
}

.modes button {
    display: flex;
    align-items: center;
    justify-content: center;
    width: 32px;
    height: 32px;
}

.modes .on {
    background: #c8c6c4;
}

.stitch {
    fill: #1a7665;
    stroke-dasharray: 2 1;
}

.thick {
    stroke-width: 2;
}

.notch {
    stroke: #979593;
}

.gallery {
    display: grid;
    grid-template-columns: repeat(6, 28px);
    grid-auto-rows: 28px;
    padding: 4px 0 3px 6px;
    align-items: center;
    justify-items: center;
}

.gallery svg {
    width: 18px;
    height: 18px;
    overflow: visible;
}

.gallery .picked {
    outline: 1px solid #8a8886;
    outline-offset: 3px;
    background: #e1dfdd;
    box-shadow: 0 0 0 3px #e1dfdd;
}

.gallery .b { fill: #83beec; stroke: #1f6cb0; }
.gallery .g { fill: #c8c6c4; stroke: #797775; }
.gallery .w { fill: #fff; }
.gallery .o { fill: #e39a3b; stroke: #c27a1a; }
.gallery .bs { stroke: #2b88d8; }
.gallery .bk { fill: #83beec; stroke: none; }
.gallery .kf { fill: #3b3a39; stroke: none; }
.gallery .wb { fill: #fff; stroke: #1f6cb0; }
.gallery .grn { fill: #4ba569; stroke: #217a41; }
.gallery .red { fill: #e05a5a; stroke: #a4262c; }
.gallery .nav { fill: #2b88c0; stroke: none; }
.gallery .teal { stroke: #1a7665; stroke-width: 2; }
.gallery .violet { fill: #fff; stroke: #8a4fa3; }

.gallery text {
    fill: #2b88d8;
    stroke: none;
    font-size: 8px;
}

.gallery .big {
    font-size: 15px;
    font-weight: 700;
}

.more {
    font-weight: 700;
}

.wells {
    padding: 0 5px 0 4px;
    border-top: 1px solid #e1dfdd;
}

.wells h5 {
    padding: 9px 8px 7px;
    font-size: 11px;
}

.wells .strong {
    padding-bottom: 0;
    font-weight: 600;
    color: #605e5c;
}

.well {
    height: 37px;
    padding: 3px 2px;
    border: 1px dashed #c8c6c4;
    background: #fff;
}

.pill {
    display: flex;
    align-items: center;
    justify-content: space-between;
    height: 23px;
    padding: 0 3px 0 4px;
    border: 1px solid #b3b0ad;
    border-radius: 2px;
    background: #edebe9;
}

.pill svg {
    stroke: #605e5c;
}

.well.blank {
    height: 28px;
    padding: 5px 10px;
}

.well.drill {
    height: 27px;
    margin-top: 5px;
    padding: 4px 8px;
    white-space: nowrap;
}

.switch {
    position: relative;
    display: flex;
    align-items: center;
    justify-content: space-between;
    height: 27px;
    padding: 0 17px 0 8px;
}

.wells .strong + .switch {
    margin-top: 4px;
}

.switch input {
    appearance: none;
    width: 32px;
    height: 16px;
    margin: 0;
    border: 1px solid #605e5c;
    border-radius: 8px;
    background: radial-gradient(circle at 8px 7px, #605e5c 4px, transparent 5px) #fff;
}

.switch input:checked {
    border-color: #1a7665;
    background: radial-gradient(circle at 22px 7px, #fff 4px, transparent 5px) #1a7665;
}

.switch span {
    position: absolute;
    right: 21px;
    font-size: 9px;
    line-height: 16px;
}

.switch input:checked + span {
    right: 32px;
    color: #fff;
}

.data {
    width: 181px;
}

.data > .search {
    height: 27px;
    margin: 5px 4px 10px;
    gap: 6px;
    padding-left: 7px;
}

.fields {
    list-style: none;
}

.fields li, .fields label {
    display: flex;
    align-items: center;
    height: 24px;
}

.fields svg {
    stroke: #8a8886;
}

.fields .dark {
    stroke: #252423;
}

.fields .table-row {
    gap: 3px;
    padding-left: 7px;
}

.table-icon {
    position: relative;
    margin-right: 2px;
}

.badge {
    position: absolute;
    top: 6px;
    left: 8px;
    width: 11px;
    height: 11px;
    border-radius: 50%;
    background: #1a7665;
}

.badge::after, .fields input:checked::after {
    content: "";
    display: block;
    width: 7px;
    height: 4px;
    margin: 2px auto 0;
    border: solid #fff;
    border-width: 0 0 1px 1px;
    transform: rotate(-45deg);
}

.expand {
    width: 14px;
    margin-left: 24px;
}

.fields input {
    appearance: none;
    width: 12px;
    height: 12px;
    margin: 0 6px 0 0;
    border: 1px solid #8a8886;
    border-radius: 2px;
}

.fields input:checked {
    border-color: #1a7665;
    background: #1a7665;
}

.type {
    width: 16px;
    margin-right: 4px;
}

.markup {
    position: absolute;
    top: 0;
    right: 0;
    width: 500px;
    stroke: #e30d0a;
    stroke-width: 3;
    pointer-events: none;
}

.markup .tipfill {
    fill: #e30d0a;
    stroke-width: 1;
}

/* Status bar */
.status {
    display: flex;
    align-items: center;
    justify-content: space-between;
    height: 23px;
    padding: 0 19px 0 5px;
    border-top: 1px solid #d2d0ce;
    font-size: 12px;
}

.zoom {
    display: flex;
    align-items: center;
    gap: 7px;
}

.zoom input {
    appearance: none;
    width: 98px;
    height: 12px;
    margin: 0;
    background: linear-gradient(#605e5c, #605e5c) center / 100% 1px no-repeat;
}

.zoom input::-webkit-slider-thumb {
    appearance: none;
    width: 3px;
    height: 11px;
    background: #323130;
}

.zoom span {
    margin: 0 4px 0 6px;
}
```
